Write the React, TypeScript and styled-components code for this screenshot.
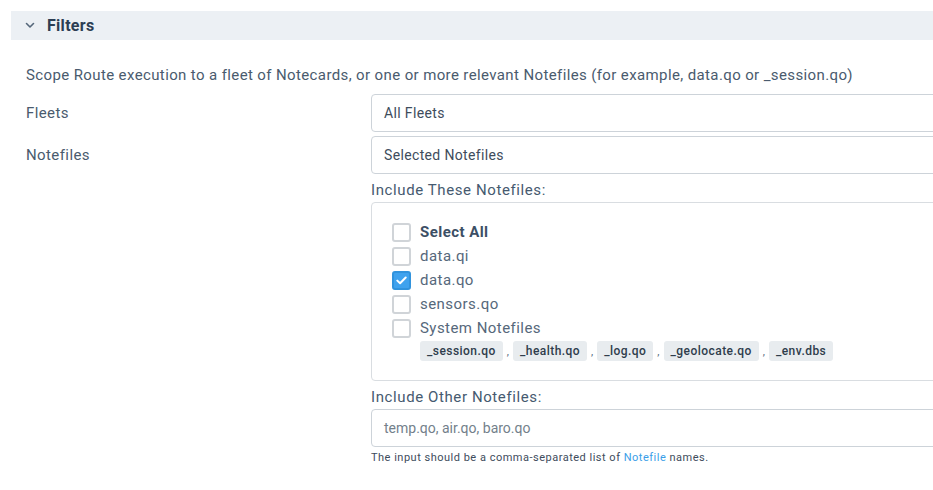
import React from 'react';
import styled, { createGlobalStyle } from 'styled-components';

const GlobalStyle = createGlobalStyle`
  html, body {
    margin: 0;
    padding: 0;
    background: #ffffff;
    overflow: hidden;
  }
  body {
    font-family: Roboto, "Liberation Sans", sans-serif;
    color: #4a5b6e;
  }
`;

const Page = styled.div`
  width: 1100px;
  padding: 11px 0 0 11px;
`;

const SectionHeader = styled.div`
  height: 29px;
  background: #ecf0f4;
  display: flex;
  align-items: center;
  padding-left: 14px;
  gap: 12px;
`;

const HeaderTitle = styled.span`
  font-size: 16px;
  font-weight: 700;
  color: #2c3e53;
  letter-spacing: 0.3px;
`;

const SectionBody = styled.div`
  padding: 25px 0 0 15px;
`;

const Description = styled.p`
  margin: 0 0 9px;
  font-size: 15px;
  line-height: 20px;
  letter-spacing: 0.38px;
  color: #4a5b6e;
`;

const FieldGrid = styled.div`
  display: grid;
  grid-template-columns: 345px 1fr;
  row-gap: 4px;
`;

const FieldLabel = styled.div`
  font-size: 15px;
  line-height: 38px;
  letter-spacing: 0.4px;
  color: #4a5b6e;
`;

const FieldColumn = styled.div`
  display: flex;
  flex-direction: column;
`;

const SelectBox = styled.div`
  height: 36px;
  border: 1px solid #cdd3d9;
  border-radius: 4px;
  display: flex;
  align-items: center;
  padding: 0 12px;
  font-size: 14px;
  letter-spacing: 0.35px;
  color: #3e4c5c;
  background: #fff;
`;

const SubLabel = styled.div<{ $top: number }>`
  margin-top: ${p => p.$top}px;
  font-size: 15px;
  line-height: 20px;
  letter-spacing: 0.6px;
  color: #465a70;
  margin-bottom: 2px;
`;

const CheckPanel = styled.div`
  border: 1px solid #d9dde1;
  border-radius: 4px;
  padding: 17px 20px 19px;
  display: flex;
  flex-direction: column;
`;

const CheckRow = styled.label`
  display: flex;
  align-items: center;
  gap: 9px;
  height: 24px;
`;

const Box = styled.span<{ $checked?: boolean }>`
  width: 19px;
  height: 19px;
  box-sizing: border-box;
  border-radius: 3px;
  border: 2px solid ${p => (p.$checked ? '#3193dd' : '#d0d4d8')};
  background: ${p => (p.$checked ? '#3fa2ee' : '#fff')};
  display: flex;
  align-items: center;
  justify-content: center;
`;

const CheckText = styled.span<{ $bold?: boolean }>`
  font-size: 15px;
  letter-spacing: 0.45px;
  font-weight: ${p => (p.$bold ? 700 : 400)};
  color: ${p => (p.$bold ? '#3c4f65' : '#56687b')};
`;

const TagRow = styled.div`
  display: flex;
  align-items: center;
  margin-left: 28px;
  margin-top: 1px;
`;

const Tag = styled.span`
  height: 20px;
  line-height: 20px;
  padding: 0 7px;
  border-radius: 3px;
  background: #e8ecef;
  font-size: 12px;
  letter-spacing: 0.45px;
  font-weight: 500;
  color: #2f3d4c;
`;

const Sep = styled.span`
  font-size: 11px;
  color: #56687b;
  margin: 0 4px 0 4px;
`;

const TextInput = styled.div`
  height: 36px;
  border: 1px solid #cdd3d9;
  border-radius: 4px;
  display: flex;
  align-items: center;
  padding: 0 12px;
  font-size: 14px;
  letter-spacing: 0;
  color: #737f8b;
`;

const HelpText = styled.div`
  margin-top: 4px;
  font-size: 11px;
  line-height: 14px;
  letter-spacing: 0.5px;
  color: #3e4c5c;
`;

const Link = styled.a`
  color: #3a9ee8;
  text-decoration: none;
`;

const Chevron = () => (
  <svg width="10" height="7" viewBox="0 0 10 7" fill="none">
    <path d="M1.5 1.5 L5 5 L8.5 1.5" stroke="#55677a" strokeWidth="1.6" strokeLinecap="round" strokeLinejoin="round" />
  </svg>
);

const Check = () => (
  <svg width="11" height="9" viewBox="0 0 11 9" fill="none">
    <path d="M1.3 4.6 L4.1 7.3 L9.7 1.5" stroke="#fff" strokeWidth="2" strokeLinecap="round" strokeLinejoin="round" />
  </svg>
);

const files = [
  { name: 'data.qi', checked: false },
  { name: 'data.qo', checked: true },
  { name: 'sensors.qo', checked: false },
];

const systemFiles = ['_session.qo', '_health.qo', '_log.qo', '_geolocate.qo', '_env.dbs'];

export default function App() {
  return (
    <>
      <GlobalStyle />
      <Page>
        <SectionHeader>
          <Chevron />
          <HeaderTitle>Filters</HeaderTitle>
        </SectionHeader>
        <SectionBody>
          <Description>
            Scope Route execution to a fleet of Notecards, or one or more relevant Notefiles (for example, data.qo or _session.qo)
          </Description>
          <FieldGrid>
            <FieldLabel>Fleets</FieldLabel>
            <SelectBox>All Fleets</SelectBox>
            <FieldLabel>Notefiles</FieldLabel>
            <FieldColumn>
              <SelectBox>Selected Notefiles</SelectBox>
              <SubLabel $top={6}>Include These Notefiles:</SubLabel>
              <CheckPanel>
                <CheckRow>
                  <Box />
                  <CheckText $bold>Select All</CheckText>
                </CheckRow>
                {files.map(f => (
                  <CheckRow key={f.name}>
                    <Box $checked={f.checked}>{f.checked && <Check />}</Box>
                    <CheckText>{f.name}</CheckText>
                  </CheckRow>
                ))}
                <CheckRow>
                  <Box />
                  <CheckText>System Notefiles</CheckText>
                </CheckRow>
                <TagRow>
                  {systemFiles.map((s, i) => (
                    <React.Fragment key={s}>
                      {i > 0 && <Sep>,</Sep>}
                      <Tag>{s}</Tag>
                    </React.Fragment>
                  ))}
                </TagRow>
              </CheckPanel>
              <SubLabel $top={6}>Include Other Notefiles:</SubLabel>
              <TextInput>temp.qo, air.qo, baro.qo</TextInput>
              <HelpText>
                The input should be a comma-separated list of <Link href="#">Notefile</Link> names.
              </HelpText>
            </FieldColumn>
          </FieldGrid>
        </SectionBody>
      </Page>
    </>
  );
}
